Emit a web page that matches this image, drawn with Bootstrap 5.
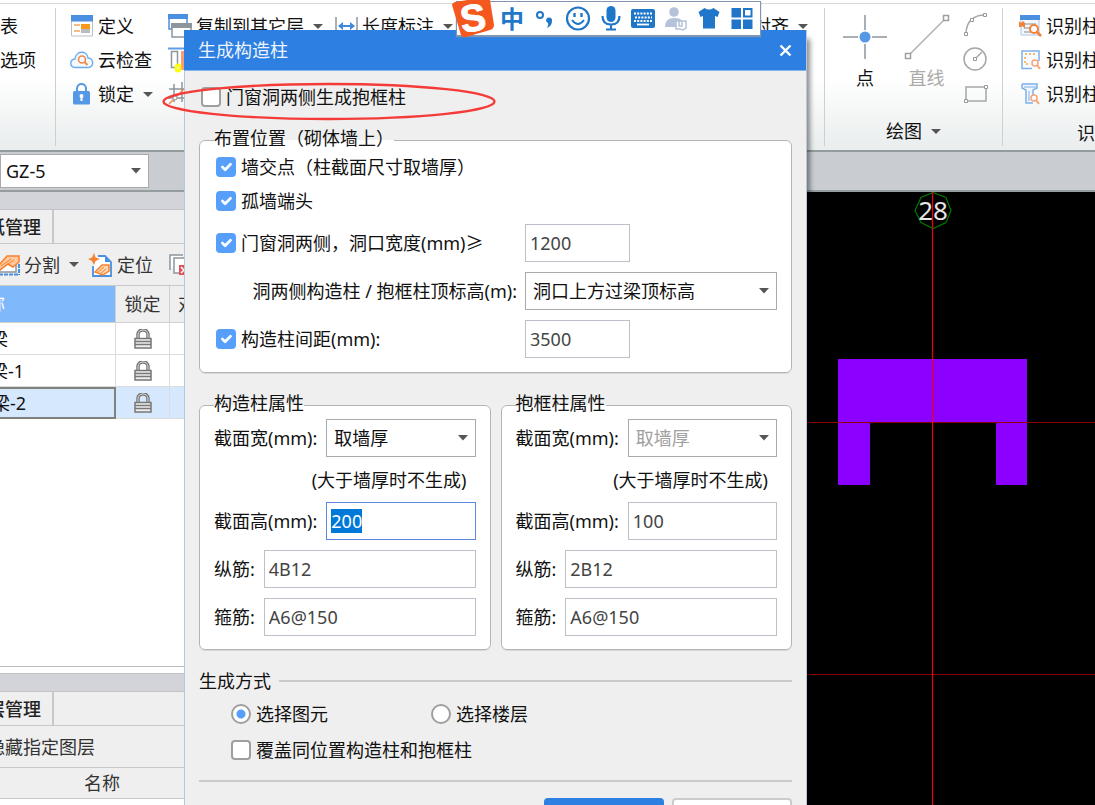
<!DOCTYPE html>
<html lang="zh-CN">
<head>
<meta charset="utf-8">
<meta name="viewport" content="width=device-width, initial-scale=1">
<title>生成构造柱</title>
<link href="https://cdn.jsdelivr.net/npm/bootstrap@5.3.0/dist/css/bootstrap.min.css" rel="stylesheet">
<style>
body{font:18px/24px "Noto Sans","Noto Sans CJK SC",sans-serif;color:#111;background:#fff}
svg{flex:none;display:block}
button{color:inherit}
.tool{background:none;border:0;padding:0;display:flex;align-items:center;gap:4px;white-space:nowrap;line-height:24px}
.caret{width:0;height:0;border:5px solid transparent;border-top-color:#555;border-bottom:0;flex:none}
.tool .caret{margin-left:5px}

/* ribbon */
.top-strip{height:4px;border-bottom:1px solid #d8d8d8;background:#fff}
.ribbon{height:146px;background:linear-gradient(#fff 50%,#e9eded);padding:4px 0}
.ribbon-group{border-right:1px solid #cfcfcf;padding-top:1px;overflow:hidden}
.ribbon-line{height:34px;display:flex;align-items:center}
.icon-slot{width:24px;display:flex;justify-content:center}
.first-group{width:56px}
.edit-group{padding-left:14px}
.draw-group{width:178px}
.draw-tools{padding:0 14px 0 18px}
.draw-name{margin-top:14px}
.recog-group{width:92px;border-right:0;padding-left:15px}
.recog-name{padding-top:10px}
.edit-tools{width:98px}
.type-bar{height:42px;background:#c9cdd2;border-top:2px solid #959ca0;border-bottom:2px solid #959ca0}
.type-bar .form-select{width:149px;height:34px;border-color:#aaa;padding:0 28px 0 5px}

/* docked panels, their left part is out of the window */
.dock{width:300px;margin-left:-40px;background:#fff;color:#333}
.band{height:18px;background:#d3d4da;border-bottom:1px solid #c4c4c8}
.tab-line{background:#efefef;border-bottom:1px solid #c8c8c8;height:34px}
.tab-line span{width:94px;border-right:2px solid #c8c8c8;padding:5px 0 0 27px;height:33px;font-weight:500;color:#222}
.dock-tools{height:42px;background:#efefef;border-bottom:1px solid #c8c8c8;padding-left:38px}
.layer-tools{padding-left:27px}
.grid-table{table-layout:fixed;width:300px;border-collapse:separate;border-spacing:0}
.grid-table th{background:#efefef;height:37px;font-weight:400;border:1px solid #d0d0d0;border-width:0 1px 1px 0;padding:0;white-space:nowrap}
.grid-table td{height:32px;border:1px solid #dcdcdc;border-width:0 1px 1px 0;padding:0;color:#111}
.grid-table .nm{padding-left:30px}
.grid-table th.nm{background:#7fb9fc;color:#fff;padding-left:27px}
.grid-table tr.sel td{background:#d5e8fd}
.grid-table tr.sel td.nm{border:2px solid #80807d}
.split{height:8px;border-top:1px solid #bbb;border-bottom:1px solid #c4c4c8}
.layer-head{height:31px;background:#efefef;border-bottom:1px solid #c8c8c8;padding:3px 0 0 124px}
.layer-list{height:6px}
.cad{background:#000;overflow:hidden}

/* dialog */
.dlg{position:absolute;left:184px;top:30px;width:623px;background:#efefef;border:1px solid #b9c7dd;border-top:0;box-shadow:4px 8px 5px -1px rgba(0,0,0,.45)}
.dlg-title{height:41px;margin:0 0 0 -1px;background:#2d7fe1;color:#eef4fc;border-bottom:1px solid #86b3ea;padding:0 14px 0 14px}
.dlg-body{padding:0 14px}
.first-line{padding:14px 0 20px 2px}
fieldset.box{background:#fff;border:1px solid #b4b4b4;border-radius:6px;padding:0 14px 9px;box-shadow:0 1px 0 #d8d8d8}
fieldset.box legend{float:none;width:auto;margin:0;padding:0 0 4px;font-size:18px;line-height:18px}
.line32{height:32px;margin-bottom:2px}
.line48{height:48px}
.line32,.line48{padding-left:2px}
.form-control,.form-select{height:38px;border-radius:0;font-size:18px;line-height:24px;border:1px solid #bcc0c8;padding:0 4px 0 4px;color:#444;min-width:0}
.form-select{border-color:#a8abad;color:#111;padding:0 24px 0 7px;background-image:url("data:image/svg+xml,%3Csvg xmlns='http://www.w3.org/2000/svg' viewBox='0 0 10 6'%3E%3Cpath d='M0 0h10L5 5.500z' fill='%23555'/%3E%3C/svg%3E");background-size:10px 6px;background-position:right 7px center}
.form-select:disabled{background-color:#fff;color:#a0a0a0;opacity:1}
.form-control:focus{box-shadow:none;border-color:#5d86e0;color:#444}
.form-control::selection{background:#0078d7;color:#fff}
.form-check-input{width:20px;height:20px;margin:0;border:2px solid #9f9f9f;flex:none}
.form-check-input[type=checkbox]{border-radius:4px}
.form-check-input:checked[type=checkbox]{background-color:#56a0fb;border-color:#56a0fb;background-size:18px;background-position:center}
.form-check-input:checked[type=radio]{background-color:#fff;border-color:#9f9f9f;background-image:radial-gradient(circle,#56a0fb 4px,#fff 5px)}
.chk{display:flex;align-items:center;gap:5px}
.num{width:105px}
.right-part{width:252px}
.groups{gap:10px;padding-top:21px}
.props{padding-top:3px}
.props .field{display:flex;align-items:center;gap:9px;margin-bottom:10px}
.props .field label{white-space:nowrap}
.props .form-control,.props .form-select{flex:1;width:0}
.note{height:45px;padding-right:9px;display:flex;align-items:center;justify-content:flex-end;margin-top:-10px}
.mode-head{padding-top:19px}
.mode-lines{padding:9px 0 18px 32px}
.rule{border-top:2px solid #cacaca}
.radio-cell{width:200px}
.btn-dlg{width:120px;height:38px;border-radius:4px;font-size:18px}
.btn-ok{background:#2d7fe1;color:#fff}
.btn-no{background:#fff;border:2px solid #ccc}

/* input method bar */
.ime{position:absolute;left:456px;top:1px;width:305px;height:35px;background:#fff;border:1px solid #8095b3;box-shadow:0 1px 1px #8095b3;color:#2077c9}
.ime-keys{padding:0 5px 0 42px}
.ime-keys>*{width:26px;display:flex;justify-content:center}
.ime b{font-size:24px}
.ime-logo{position:absolute;left:-6px;top:-2px}
.ring{position:absolute;left:161px;top:81px}
</style>
</head>
<body>
<div class="vh-100 overflow-hidden position-relative d-flex flex-column">

<div class="top-strip flex-shrink-0"></div>
<div class="ribbon d-flex flex-shrink-0">
  <div class="ribbon-group first-group flex-shrink-0">
    <div class="ribbon-line"><button class="tool">表</button></div>
    <div class="ribbon-line"><button class="tool">选项</button></div>
  </div>
  <div class="ribbon-group edit-group flex-grow-1 d-flex">
    <div class="edit-tools flex-shrink-0">
      <div class="ribbon-line"><button class="tool"><span class="icon-slot"><svg width="22" height="22" viewBox="0 0 22 22"><path d="M.5.500h21v20.500H.5z" fill="#fff" stroke="#b4c0cc"/><path d="M0 0h22v6.500H0z" fill="#4a8fe0"/><path d="M3 10h6M3 16h6" stroke="#f0a860" stroke-width="1.500"/><path d="M10 9h9v5h-9z" fill="#f79a1c"/><path d="M10 14h9v4h-9z" fill="#b8bcc2"/></svg></span>定义</button></div>
      <div class="ribbon-line"><button class="tool"><span class="icon-slot"><svg width="24" height="18" viewBox="0 0 24 18"><path d="M6 16.500C-1 16.500-.5 8.500 5 8 5.500-.5 17-1 18 7c6 0 6.500 9.500 0 9.500z" fill="#f3f9ff" stroke="#6aaaf0" stroke-width="1.400"/><circle cx="12" cy="8.500" r="3.500" fill="none" stroke="#f08a48" stroke-width="1.600"/><path d="M14.500 11l3 3" stroke="#f08a48" stroke-width="2"/></svg></span>云检查</button></div>
      <div class="ribbon-line"><button class="tool"><span class="icon-slot justify-content-end pe-1"><svg width="17" height="22" viewBox="0 0 17 22"><path d="M4 9V5.500C4-.5 13-.5 13 5.500V9" fill="none" stroke="#5598e6" stroke-width="2"/><rect y="8" width="17" height="13.500" rx="1.500" fill="#5598e6"/><circle cx="8.500" cy="13" r="2" fill="#fff"/><path d="M7.500 14h2v4h-2z" fill="#fff"/></svg></span>锁定<span class="caret"></span></button></div>
    </div>
    <div class="flex-grow-1">
      <div class="ribbon-line">
        <button class="tool"><svg width="24" height="24" viewBox="0 0 24 24"><path d="M1 1h18v14H1z" fill="#fff" stroke="#4a8fe0" stroke-width="1.500"/><path d="M0 0h20v5H0z" fill="#4a8fe0"/><path d="M4 10h19v13H4z" fill="#fff" stroke="#8d969d" stroke-width="1.500"/><path d="M3 9h21v5H3z" fill="#8d969d"/></svg>复制到其它层<span class="caret"></span></button>
        <button class="tool ms-2"><svg class="ms-1" width="23" height="18" viewBox="0 0 23 18"><path d="M1 0v18M22 0v18" stroke="#8d969d" stroke-width="1.500"/><path d="M4 9h15" stroke="#3f88dc" stroke-width="2"/><path d="M3 9l5-4v8zM20 9l-5-4v8z" fill="#3f88dc"/></svg>长度标注<span class="caret"></span></button>
        <button class="tool ms-auto me-3">对齐<span class="caret"></span></button>
      </div>
      <div class="ribbon-line"><svg width="24" height="26" viewBox="0 0 24 26"><path d="M0 1.500h20" stroke="#5c9fe6" stroke-width="2"/><path d="M3.500 4.500h6v16h-6z" fill="#fff" stroke="#8d969d" stroke-width="1.500"/><path d="M13 4h6v19h-6z" fill="#ff9c72"/><ellipse cx="10" cy="21" rx="3.500" ry="4.500" fill="#ff0"/><ellipse cx="10" cy="21" rx="1" ry="2" fill="#eec"/></svg></div>
      <div class="ribbon-line"><svg width="24" height="24" viewBox="0 0 24 24"><path d="M6 2v18M14 0v20M1 7h20M0 16h20" stroke="#8d969d" stroke-width="1.500"/><path d="M1 22L20 3" stroke="#f08a48" stroke-width="1.500"/><circle cx="7" cy="16" r="2" fill="#fff" stroke="#8d969d"/></svg></div>
    </div>
  </div>
  <div class="ribbon-group draw-group flex-shrink-0 d-flex flex-column">
    <div class="draw-tools d-flex justify-content-between">
      <button class="tool flex-column gap-0"><svg width="44" height="57" viewBox="0 0 44 57"><path d="M22 6v44M0 28h44" stroke="#8d969d" stroke-width="1.500"/><circle cx="22" cy="28" r="7" fill="#fff"/><circle cx="22" cy="28" r="5.500" fill="#5598e6"/></svg>点</button>
      <button class="tool flex-column gap-0 ps-1" style="color:#aaa"><svg width="46" height="57" viewBox="0 0 46 57"><path d="M4 47L42 9" stroke="#b0b0b0" stroke-width="1.500"/><path d="M1.500 44.500h5v5h-5zM39.500 6.500h5v5h-5z" fill="#fff" stroke="#a0a0a0" stroke-width="1.500"/></svg>直线</button>
      <svg width="26" height="96" viewBox="0 0 26 96"><g fill="none" stroke="#a6a6a6" stroke-width="1.500"><path d="M4 25C4 12 12 6 23 6"/><circle cx="13" cy="50" r="11"/><path d="M13 50l7-7"/><path d="M4 78h20v14H4z"/></g><path d="M2.500 23.500h3v3h-3zM8.500 9.500h3v3h-3zM21.500 4.500h3v3h-3zM11.500 48.500h3v3h-3zM2.500 90.500h3v3h-3zM22.500 76.500h3v3h-3z" fill="#fff" stroke="#999"/></svg>
    </div>
    <button class="tool draw-name align-self-center">绘图<span class="caret"></span></button>
  </div>
  <div class="ribbon-group recog-group flex-shrink-0">
    <div class="ribbon-line"><button class="tool"><svg width="24" height="22" viewBox="0 0 22 22"><path d="M2 1h18v19H2z" fill="#f4f8fd" stroke="#a9c6ea"/><path d="M1 0h20v5H1z" fill="#4a8fe0"/><path d="M5 9h12M5 13h7M5 17h7" stroke="#aab0b8" stroke-width="1.500"/><path d="M0 6l2 2 2-2 2 2v5l-2-1v-1l-2 1H0z" fill="#f4803a"/><circle cx="15" cy="14" r="4" fill="#fff" stroke="#f4803a" stroke-width="2"/><path d="M18 17l4 4" stroke="#f4803a" stroke-width="2.500"/></svg>识别柱</button></div>
    <div class="ribbon-line"><button class="tool"><svg width="24" height="22" viewBox="0 0 22 22"><path d="M13 19.500H3V2h17v10" fill="#f8fbff" stroke="#7fb0ea" stroke-width="1.500"/><path d="M6 5h11M6 8v7h5" fill="none" stroke="#f3bd6a" stroke-width="2" stroke-dasharray="2 2"/><circle cx="16" cy="14" r="3" fill="#fff" stroke="#f9a27a" stroke-width="1.500"/><path d="M18 16l3 4" stroke="#f9a27a" stroke-width="2"/></svg>识别柱</button></div>
    <div class="ribbon-line"><button class="tool"><svg width="24" height="22" viewBox="0 0 22 22"><path d="M3 1h15v4l-4 2v6M14 20H7V7L3 5V1" fill="#eef6ff" stroke="#7fb0ea" stroke-width="1.500"/><path d="M5 4h12M10 8v10" stroke="#7fb0ea"/><circle cx="15" cy="15" r="3" fill="#fff" stroke="#f9a27a" stroke-width="1.500"/><path d="M17 17l3 4" stroke="#f9a27a" stroke-width="2"/></svg>识别柱</button></div>
    <div class="recog-name text-end">识</div>
  </div>
</div>

<div class="type-bar d-flex align-items-center flex-shrink-0">
  <select class="form-select" aria-label="构件"><option>GZ-5</option></select>
</div>

<div class="d-flex flex-grow-1 overflow-hidden">
  <div class="dock flex-shrink-0 d-flex flex-column">
    <div class="band flex-shrink-0"></div>
    <div class="tab-line d-flex flex-shrink-0"><span>纸管理</span></div>
    <div class="dock-tools d-flex align-items-center flex-shrink-0">
      <button class="tool"><svg width="22" height="22" viewBox="0 0 22 22"><path d="M1 20.500h19M21 10v11" stroke="#4a8fe0" stroke-width="2" stroke-dasharray="4 1"/><path d="M4 10h14v8H1z" fill="#fff" stroke="#8d969d" stroke-width="1.500"/><path d="M0 12L9 2h12v6l-6 5-5-3-8 6z" fill="#ffc79a" stroke="#f58230" stroke-width="1.500"/><path d="M3 12l10-7M7 12l9-6" stroke="#f58230"/></svg>分割<span class="caret"></span></button>
      <button class="tool ms-2"><svg width="26" height="24" viewBox="0 0 26 24"><path d="M11 3h7l6 6v14H6V13" fill="#fff" stroke="#4a8fe0" stroke-width="1.800"/><path d="M18 3v6h6z" fill="#4a8fe0"/><path d="M7 0l1.500 4.500L13 6 8.500 8 7 12 5 8 1 6l4-1.500z" fill="#f58230"/><path d="M8 19l7-7h7v6l-6 4z" fill="#ffd5b0" stroke="#f58230" stroke-width="1.500"/><path d="M11 19l6-5M13 21l6-5" stroke="#f58230"/></svg>定位</button>
      <button class="tool ms-3" aria-label="删除"><svg width="24" height="24" viewBox="0 0 24 24"><path d="M1 17V2h13M5 20V5h14v15z" fill="#fff" stroke="#8d969d" stroke-width="1.500"/><path d="M10 12h10v10H10z" fill="#e25058"/><path d="M12 14l6 6M18 14l-6 6" stroke="#fff" stroke-width="1.500"/></svg></button>
    </div>
    <table class="grid-table flex-shrink-0">
      <colgroup><col style="width:156px"><col style="width:54px"><col></colgroup>
      <thead><tr><th class="nm">称</th><th class="text-center">锁定</th><th class="ps-2">对</th></tr></thead>
      <tbody id="drawings"></tbody>
    </table>
    <div class="flex-grow-1"></div>
    <div class="split flex-shrink-0"></div>
    <div class="band flex-shrink-0"></div>
    <div class="tab-line d-flex flex-shrink-0"><span>层管理</span></div>
    <div class="dock-tools layer-tools d-flex align-items-center flex-shrink-0"><button class="tool">隐藏指定图层</button></div>
    <div class="layer-head flex-shrink-0">名称</div>
    <div class="layer-list flex-shrink-0"></div>
  </div>
  <div class="cad flex-grow-1 d-flex justify-content-end">
    <svg width="289" height="613" viewBox="0 0 289 613" overflow="visible">
      <path d="M32 167h189v126h-31v-63H64v63H32z" fill="#8b00ff"/>
      <path d="M-900 230.500H289M-900 482.500H289" stroke="#8c0000"/>
      <path d="M127 .5l13 5 5 13-5 12-13 6-12-6-6-12 6-13z" fill="none" stroke="#007a00" stroke-width="1.200"/>
      <text x="127" y="28" text-anchor="middle" font-size="26" fill="#e6e6e6">28</text>
      <path d="M126.500 0v613" stroke="#ee0010" stroke-width="1.200"/>
    </svg>
  </div>
</div>

<form class="dlg" onsubmit="return false">
  <div class="dlg-title d-flex align-items-center justify-content-between">
    <span>生成构造柱</span>
    <button type="button" class="tool" aria-label="关闭"><svg width="13" height="13" viewBox="0 0 13 13"><path d="M1.500 1.500l10 10M11.500 1.500l-10 10" stroke="#fff" stroke-width="2.400"/></svg></button>
  </div>
  <div class="dlg-body">
    <div class="chk first-line"><input class="form-check-input" type="checkbox" id="c0"><label for="c0">门窗洞两侧生成抱框柱</label></div>
    <fieldset class="box">
      <legend>布置位置（砌体墙上）</legend>
      <div class="chk line32"><input class="form-check-input" type="checkbox" id="c1" checked><label for="c1">墙交点（柱截面尺寸取墙厚）</label></div>
      <div class="chk line32"><input class="form-check-input" type="checkbox" id="c2" checked><label for="c2">孤墙端头</label></div>
      <div class="line48 d-flex align-items-center justify-content-between">
        <div class="chk"><input class="form-check-input" type="checkbox" id="c3" checked><label for="c3">门窗洞两侧，洞口宽度(mm)≥</label></div>
        <div class="right-part"><input class="form-control num" value="1200" aria-label="洞口宽度"></div>
      </div>
      <div class="line48 d-flex align-items-center justify-content-end">
        <label class="me-2" for="s1">洞两侧构造柱 / 抱框柱顶标高(m):</label>
        <div class="right-part"><select class="form-select" id="s1"><option>洞口上方过梁顶标高</option></select></div>
      </div>
      <div class="line48 d-flex align-items-center justify-content-between">
        <div class="chk"><input class="form-check-input" type="checkbox" id="c4" checked><label for="c4">构造柱间距(mm):</label></div>
        <div class="right-part"><input class="form-control num" value="3500" aria-label="构造柱间距"></div>
      </div>
    </fieldset>

    <div class="groups d-flex">
      <fieldset class="box flex-fill">
        <legend>构造柱属性</legend>
        <div class="props">
          <div class="field"><label for="a1">截面宽(mm):</label><select class="form-select" id="a1"><option>取墙厚</option></select></div>
          <div class="note">(大于墙厚时不生成)</div>
          <div class="field"><label for="a2">截面高(mm):</label><input class="form-control" id="a2" value="200"></div>
          <div class="field"><label for="a3">纵筋:</label><input class="form-control" id="a3" value="4B12"></div>
          <div class="field mb-1"><label for="a4">箍筋:</label><input class="form-control" id="a4" value="A6@150"></div>
        </div>
      </fieldset>
      <fieldset class="box flex-fill">
        <legend>抱框柱属性</legend>
        <div class="props">
          <div class="field"><label for="b1">截面宽(mm):</label><select class="form-select" id="b1" disabled><option>取墙厚</option></select></div>
          <div class="note">(大于墙厚时不生成)</div>
          <div class="field"><label for="b2">截面高(mm):</label><input class="form-control" id="b2" value="100"></div>
          <div class="field"><label for="b3">纵筋:</label><input class="form-control" id="b3" value="2B12"></div>
          <div class="field mb-1"><label for="b4">箍筋:</label><input class="form-control" id="b4" value="A6@150"></div>
        </div>
      </fieldset>
    </div>

    <div class="mode-head d-flex align-items-center gap-2"><span>生成方式</span><div class="rule flex-grow-1"></div></div>
    <div class="mode-lines">
      <div class="d-flex">
        <div class="chk radio-cell"><input class="form-check-input" type="radio" name="mode" id="r1" checked><label for="r1">选择图元</label></div>
        <div class="chk"><input class="form-check-input" type="radio" name="mode" id="r2"><label for="r2">选择楼层</label></div>
      </div>
      <div class="chk mt-2 pt-1"><input class="form-check-input" type="checkbox" id="c5"><label for="c5">覆盖同位置构造柱和抱框柱</label></div>
    </div>
    <div class="rule"></div>
    <div class="d-flex justify-content-end gap-2 py-3"><button class="btn btn-dlg btn-ok">确定</button><button type="button" class="btn btn-dlg btn-no">取消</button></div>
  </div>
</form>

<svg class="ring" width="338" height="41" viewBox="0 0 338 41"><ellipse cx="168" cy="20.500" rx="165.500" ry="17.500" fill="none" stroke="#f53b38" stroke-width="2.400"/></svg>

<div class="ime">
  <svg class="ime-logo" width="45" height="40" viewBox="0 0 45 40"><path d="M1 5Q1 3 4 2L35-3Q38-3 39 0l4 25q0 4-4 5L15 37q-4 1-5-2z" fill="#f4581f"/><text x="22" y="31" text-anchor="middle" font-family="Liberation Sans" font-weight="700" font-size="38" fill="#fff" stroke="#fff" transform="rotate(-8 22 18)">S</text></svg>
  <div class="ime-keys d-flex align-items-center justify-content-between h-100">
    <b>中</b>
    <svg width="20" height="22" viewBox="0 0 20 22"><circle cx="5" cy="7" r="3" fill="none" stroke="#2077c9" stroke-width="2"/><path d="M11 12a3 3 0 1 1 6 1q0 5-5 7 2-3 1-5-2-1-2-3z" fill="#2077c9"/></svg>
    <svg width="25" height="25" viewBox="0 0 25 25"><circle cx="12.500" cy="12.500" r="11" fill="none" stroke="#2077c9" stroke-width="2.200"/><path d="M9 7v4M16 7v4" stroke="#2077c9" stroke-width="2.400"/><path d="M6.500 14q6 8 12 0" fill="none" stroke="#2077c9" stroke-width="2"/></svg>
    <svg width="20" height="25" viewBox="0 0 20 25"><rect x="5.500" y="0" width="9" height="16" rx="4.500" fill="#2077c9"/><path d="M1.500 10q0 8.500 8.500 8.500t8.500-8.500M10 18v5M5 23.500h10" fill="none" stroke="#2077c9" stroke-width="2.200"/></svg>
    <svg width="24" height="19" viewBox="0 0 24 19"><rect width="24" height="19" rx="2" fill="#2077c9"/><path d="M3 4.500h18M4 8.500h17M3 12h18" stroke="#fff" stroke-width="2" stroke-dasharray="2 1.200"/><path d="M6 15.500h12" stroke="#fff" stroke-width="1.800"/></svg>
    <svg width="22" height="24" viewBox="0 0 22 24"><circle cx="9" cy="5" r="4.800" fill="#b5c2d8"/><path d="M0 20q0-9 9-9 7 0 8 3v6z" fill="#b5c2d8"/><path d="M11 14h10v7l-3 2-3-1h-4z" fill="#fff" stroke="#b5c2d8" stroke-width="1.500"/><path d="M14 14v5h3v-5" fill="none" stroke="#b5c2d8" stroke-width="1.500"/></svg>
    <svg width="21" height="21" viewBox="0 0 21 21"><path d="M6 0q4.500 3 9 0l6 4-2 5-2.500-1V20.500h-12V8L2 9 0 4z" fill="#2077c9"/></svg>
    <svg width="21" height="21" viewBox="0 0 21 21"><path d="M0 0h9.500v9.500H0zM0 11.500h9.500V21H0zM11.500 11.500H21V21h-9.500z" fill="#2077c9"/><path d="M12.500 1h7.500v7.500h-7.500z" fill="#fff" stroke="#2077c9" stroke-width="2"/></svg>
  </div>
</div>
</div>

<script src="https://cdn.jsdelivr.net/npm/bootstrap@5.3.0/dist/js/bootstrap.bundle.min.js"></script>
<script>
const lock='<svg class="mx-auto" width="18" height="20" viewBox="0 0 18 20"><path d="M4 9V5.500C4-.5 14-.5 14 5.500V9" fill="none" stroke="#777" stroke-width="3.500"/><path d="M4 9V5.500C4-.5 14-.5 14 5.500V9" fill="none" stroke="#ddd" stroke-width="1"/><path d="M1 9.500h16v9.500H1zM1 12.500h16M1 15.500h16" fill="#eee" stroke="#777" stroke-width="1.500"/></svg>';
document.getElementById('drawings').innerHTML=['梁','梁-1','梁-2'].map((n,i)=>
  `<tr class="${i===2?'sel':''}"><td class="nm">${n}</td><td>${lock}</td><td></td></tr>`).join('');
const field=document.getElementById('a2');
field.focus();
field.select();
</script>
</body>
</html>
